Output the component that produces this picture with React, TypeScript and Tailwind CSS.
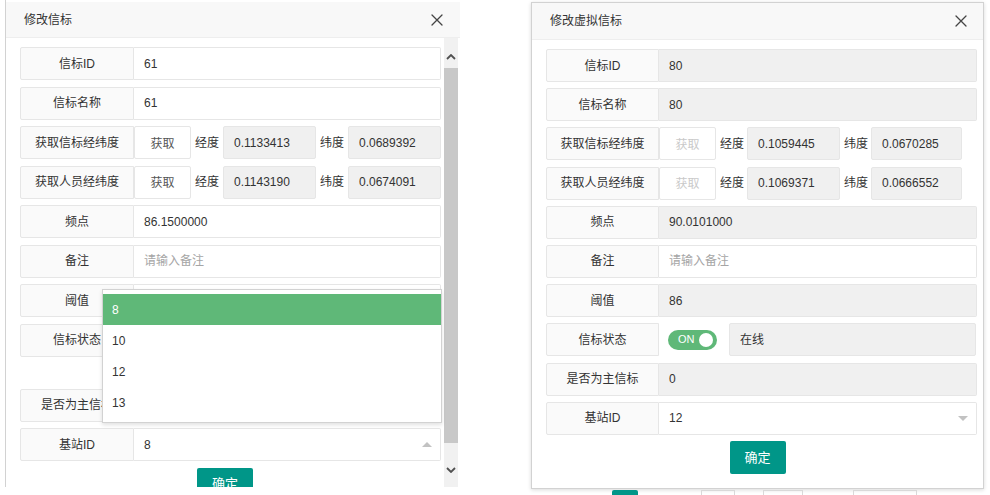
import React from "react";

const font = "font-['Liberation_Sans','Noto_Sans_CJK_SC',sans-serif]";

function CloseIcon() {
  return (
    <svg width="12" height="12" viewBox="0 0 12 12" fill="none" stroke="#444" strokeWidth="1.3" strokeLinecap="round">
      <path d="M1 1L11 11M11 1L1 11" />
    </svg>
  );
}

function Label({ width, text }: { width: string; text: string }) {
  return (
    <div
      className={`${width} shrink-0 flex items-center justify-center bg-[#fafafa] border border-[#e6e6e6] rounded-l-[2px] text-[#333]`}
    >
      {text}
    </div>
  );
}

interface FieldProps {
  label: string;
  lw: string;
  value: string;
  gray?: boolean;
  placeholder?: boolean;
  caret?: React.ReactNode;
}

function Field({ label, lw, value, gray, placeholder, caret }: FieldProps) {
  return (
    <div className="flex h-[33px] shrink-0">
      <Label width={lw} text={label} />
      <div
        className={`flex-1 flex items-center justify-between pl-[10px] pr-[8px] border border-l-0 border-[#e6e6e6] rounded-r-[2px] ${
          gray ? "bg-[#f0f0f0]" : "bg-white"
        }`}
      >
        <span className={placeholder ? "text-[#a5a5a5]" : "text-[#333]"}>{value}</span>
        {caret}
      </div>
    </div>
  );
}

interface CoordProps {
  label: string;
  lw: string;
  tw: string;
  latW: string;
  lng: string;
  lat: string;
  disabled?: boolean;
}

function CoordRow({ label, lw, tw, latW, lng, lat, disabled }: CoordProps) {
  return (
    <div className="flex h-[33px] shrink-0">
      <Label width={lw} text={label} />
      <div
        className={`w-[57px] shrink-0 flex items-center justify-center pt-[2px] border border-[#e6e6e6] rounded-[2px] bg-white ${
          disabled ? "text-[#c9c9c9]" : "text-[#555]"
        }`}
      >
        获取
      </div>
      <div className={`${tw} shrink-0 pl-[4px] flex items-center text-[#333]`}>经度</div>
      <div className="w-[93px] shrink-0 flex items-center pl-[10px] bg-[#f0f0f0] border border-[#e6e6e6] rounded-[2px] text-[#333]">
        {lng}
      </div>
      <div className={`${tw} shrink-0 pl-[4px] flex items-center text-[#333]`}>纬度</div>
      <div className={`${latW} shrink-0 flex items-center pl-[10px] bg-[#f0f0f0] border border-[#e6e6e6] rounded-[2px] text-[#333]`}>
        {lat}
      </div>
    </div>
  );
}

function Caret({ up }: { up?: boolean }) {
  return (
    <svg width="10" height="5" viewBox="0 0 10 5">
      <path d={up ? "M0 5L5 0L10 5Z" : "M0 0L10 0L5 5Z"} fill="#c2c2c2" />
    </svg>
  );
}

function Chevron({ up }: { up?: boolean }) {
  return (
    <svg width="10" height="6" viewBox="0 0 10 6" fill="none" stroke="#505050" strokeWidth="1.8">
      <path d={up ? "M1 5L5 1L9 5" : "M1 1L5 5L9 1"} />
    </svg>
  );
}

function SubmitButton() {
  return (
    <div className="w-[56px] h-[33px] shrink-0 bg-[#009688] rounded-[2px] text-white text-[13px] flex items-center justify-center">
      确定
    </div>
  );
}

function EditBeacon() {
  const lw = "w-[114px]";
  return (
    <div className="ml-[5px] pt-[2px] w-[455px] h-[487px] border-l border-[#d2d2d2] bg-white flex flex-col shrink-0">
      <div className="h-[36px] shrink-0 bg-[#f8f8f8] border-b border-[#eee] flex items-center justify-between pl-[18px] pr-[17px] text-[#333]">
        <span>修改信标</span>
        <CloseIcon />
      </div>
      <div className="relative flex-1 flex overflow-hidden">
        <div className="w-[435px] pl-[14px] pt-[9px] flex flex-col gap-[6.5px]">
          <Field label="信标ID" lw={lw} value="61" />
          <Field label="信标名称" lw={lw} value="61" />
          <CoordRow label="获取信标经纬度" lw={lw} tw="w-[32px]" latW="w-[93px]" lng="0.1133413" lat="0.0689392" />
          <CoordRow label="获取人员经纬度" lw={lw} tw="w-[32px]" latW="w-[93px]" lng="0.1143190" lat="0.0674091" />
          <Field label="频点" lw={lw} value="86.1500000" />
          <Field label="备注" lw={lw} value="请输入备注" placeholder />
          <Field label="阈值" lw={lw} value="8" />
          <Field label="信标状态" lw={lw} value="" />
          <div className="h-[19px] shrink-0" />
          <Field label="是否为主信标" lw={lw} value="1" gray />
          <Field label="基站ID" lw={lw} value="8" caret={<Caret up />} />
          <div className="flex justify-center pr-[11px] shrink-0">
            <SubmitButton />
          </div>
        </div>
        <div className="ml-[3px] w-[14px] flex flex-col bg-[#f1f1f1]">
          <div className="h-[30px] shrink-0 flex justify-center pt-[16px]">
            <Chevron up />
          </div>
          <div className="h-[375px] shrink-0 bg-[#c8c8c8]" />
          <div className="flex-1 flex justify-center pt-[24px]">
            <Chevron />
          </div>
        </div>

        <div className="absolute left-[96px] top-[251px] w-[340px] h-[134px] bg-white border border-[#d2d2d2] shadow-[0_2px_4px_rgba(0,0,0,0.12)] py-[4px] z-10">
          {["8", "10", "12", "13"].map((v, i) => (
            <div
              key={v}
              className={`h-[31px] flex items-center pl-[9px] ${i === 0 ? "bg-[#5fb878] text-white" : "text-[#333]"}`}
            >
              {v}
            </div>
          ))}
        </div>
      </div>
    </div>
  );
}

function EditVirtualBeacon() {
  const lw = "w-[113px]";
  return (
    <div className="ml-[71px] mt-[2px] w-[453px] h-[487px] border border-[#d2d2d2] shadow-[0_1px_4px_rgba(0,0,0,0.15)] bg-white flex flex-col shrink-0">
      <div className="h-[37px] shrink-0 bg-[#f8f8f8] border-b border-[#eee] flex items-center justify-between pl-[18px] pr-[16px] text-[#333]">
        <span>修改虚拟信标</span>
        <CloseIcon />
      </div>
      <div className="flex-1 pl-[14px] pr-[6px] pt-[9px] flex flex-col gap-[6.2px]">
        <Field label="信标ID" lw={lw} value="80" gray />
        <Field label="信标名称" lw={lw} value="80" gray />
        <CoordRow label="获取信标经纬度" lw={lw} tw="w-[31px]" latW="w-[91px]" lng="0.1059445" lat="0.0670285" disabled />
        <CoordRow label="获取人员经纬度" lw={lw} tw="w-[31px]" latW="w-[91px]" lng="0.1069371" lat="0.0666552" disabled />
        <Field label="频点" lw={lw} value="90.0101000" gray />
        <Field label="备注" lw={lw} value="请输入备注" placeholder />
        <Field label="阈值" lw={lw} value="86" gray />
        <div className="flex h-[33px] shrink-0">
          <Label width={lw} text="信标状态" />
          <div className="ml-[9px] self-center w-[49px] h-[20px] rounded-full bg-[#5fb878] flex items-center justify-between pl-[10px] pr-[4px]">
            <span className="text-white text-[11px] leading-none">ON</span>
            <span className="w-[14px] h-[14px] rounded-full bg-white" />
          </div>
          <div className="ml-[12px] mr-[1px] flex-1 flex items-center pl-[10px] bg-[#f0f0f0] border border-[#e6e6e6] rounded-[2px] text-[#333]">
            在线
          </div>
        </div>
        <Field label="是否为主信标" lw={lw} value="0" gray />
        <Field label="基站ID" lw={lw} value="12" caret={<Caret />} />
        <div className="flex justify-center pr-[8px] shrink-0">
          <SubmitButton />
        </div>
      </div>
    </div>
  );
}

export default function App() {
  return (
    <div className={`relative w-[990px] h-[495px] bg-white overflow-hidden flex items-start text-[12px] ${font}`}>
      <EditBeacon />
      <EditVirtualBeacon />
      <div className="absolute left-[612px] top-[490px] w-[26px] h-[8px] bg-[#009688] rounded-t-[2px]" />
      <div className="absolute left-[701px] top-[490px] w-[34px] h-[8px] border border-[#d9d9d9]" />
      <div className="absolute left-[763px] top-[490px] w-[40px] h-[8px] border border-[#d9d9d9]" />
      <div className="absolute left-[853px] top-[490px] w-[64px] h-[8px] border border-[#d9d9d9]" />
    </div>
  );
}
